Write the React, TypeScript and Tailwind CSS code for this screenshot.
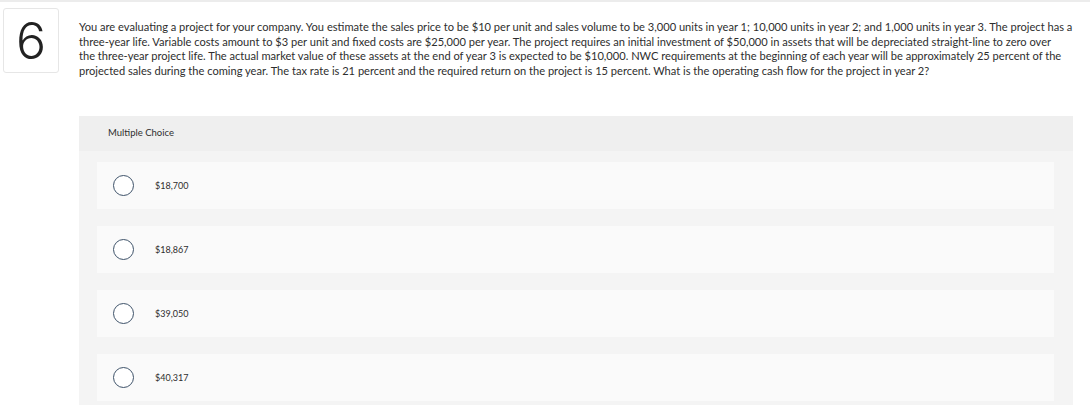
import React from 'react'

const choices = ['$18,700', '$18,867', '$39,050', '$40,317']

export default function App() {
  return (
    <div className="min-h-[405px] w-[1090px] overflow-hidden bg-white font-['Lato','Liberation_Sans',sans-serif] text-[#2e2e2e]">
      <div className="h-[2px] bg-[#ececec]" />
      <div className="flex pt-[6px]">
        <div className="ml-[3px] flex h-[65px] w-[56px] shrink-0 items-center justify-center rounded-[3px] border border-[#e6e6e6] bg-white">
          <span className="font-['Inter',sans-serif] text-[50px] font-light leading-none text-[#222]">6</span>
        </div>
        <div className="ml-[20px] w-[1005px]">
          <p className="mt-[12px] text-[11.1px] leading-[14.7px]">
            You are evaluating a project for your company. You estimate the sales price to be $10 per unit and sales volume to be 3,000 units in year 1; 10,000 units in year 2; and 1,000 units in year 3. The project has a<br />
            three-year life. Variable costs amount to $3 per unit and fixed costs are $25,000 per year. The project requires an initial investment of $50,000 in assets that will be depreciated straight-line to zero over<br />
            the three-year project life. The actual market value of these assets at the end of year 3 is expected to be $10,000. NWC requirements at the beginning of each year will be approximately 25 percent of the<br />
            projected sales during the coming year. The tax rate is 21 percent and the required return on the project is 15 percent. What is the operating cash flow for the project in year 2?
          </p>

          <section className="mt-[37px] w-[994px] bg-[#f4f4f4] pb-[10px]">
            <div className="flex h-[35px] items-center bg-[#efefef] px-[29px] text-[9.5px]">
              Multiple Choice
            </div>
            <div className="flex flex-col gap-[17px] px-[18px] pt-[11px]">
              {choices.map((c) => (
                <label
                  key={c}
                  className="flex h-[47px] w-[957px] items-center bg-[#fafafa]"
                >
                  <span className="ml-[16px] h-[21px] w-[21px] rounded-full border-[1.5px] border-[#3e5269] bg-white" />
                  <span className="ml-[21px] text-[9px]">{c}</span>
                </label>
              ))}
            </div>
          </section>
        </div>
      </div>
    </div>
  )
}
